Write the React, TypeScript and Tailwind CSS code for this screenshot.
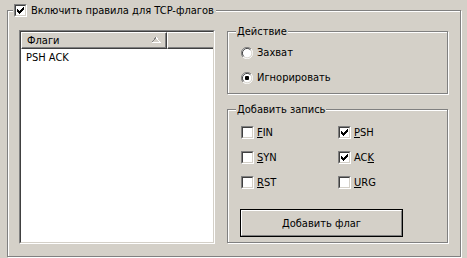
import React from "react";

const font = { fontFamily: '"DejaVu Sans Condensed", "DejaVu Sans", "Liberation Sans", sans-serif' };

function Check({ checked }: { checked?: boolean }) {
  return (
    <span className="block w-[13px] h-[13px] shrink-0 border border-t-[#808080] border-l-[#808080] border-b-white border-r-white">
      <span className="block w-full h-full bg-white border border-t-[#404040] border-l-[#404040] border-b-[#d4d0c8] border-r-[#d4d0c8]">
        {checked && (
          <svg width="9" height="9" viewBox="0 0 9 9" className="block" shapeRendering="crispEdges">
            <path d="M1 3h1v3h-1zM2 4h1v3h-1zM3 5h1v3h-1zM4 4h1v3h-1zM5 3h1v3h-1zM6 2h1v3h-1zM7 1h1v3h-1z" fill="#000" />
          </svg>
        )}
      </span>
    </span>
  );
}

function Radio({ checked }: { checked?: boolean }) {
  return (
    <svg width="12" height="12" viewBox="0 0 12 12" className="block shrink-0">
      <circle cx="6" cy="6" r="5.5" fill="#fff" />
      <path d="M10 2A5.5 5.5 0 0 0 2 10" stroke="#808080" strokeWidth="1" fill="none" />
      <path d="M9.5 2.8A4.5 4.5 0 0 0 2.8 9.5" stroke="#404040" strokeWidth="1" fill="none" />
      <path d="M2 10A5.5 5.5 0 0 0 10 2" stroke="#fff" strokeWidth="1" fill="none" />
      <path d="M2.8 9.5A4.5 4.5 0 0 0 9.5 2.8" stroke="#d4d0c8" strokeWidth="1" fill="none" />
      {checked && <rect x="4" y="4" width="4" height="4" rx="1" fill="#000" />}
    </svg>
  );
}

function Group({ title, className, children }: { title: string; className: string; children: React.ReactNode }) {
  return (
    <div className={`relative border border-[#808080] shadow-[inset_1px_1px_0_#fff,1px_1px_0_#fff] ${className}`}>
      <span className="absolute left-[8px] top-[-7px] bg-[#d4d0c8] px-[1px] leading-[13px]">{title}</span>
      {children}
    </div>
  );
}

function Flag({ label, under, checked }: { label: string; under: number; checked?: boolean }) {
  return (
    <div className="flex items-center h-[25px] gap-[3px]">
      <Check checked={checked} />
      <span>
        {label.slice(0, under)}
        <u className="underline-offset-[1px]">{label[under]}</u>
        {label.slice(under + 1)}
      </span>
    </div>
  );
}

export default function App() {
  return (
    <div className="w-[467px] h-[258px] bg-[#d4d0c8] pt-[10px] pl-[7px] text-[11px] leading-[13px] text-black" style={font}>
      <div className="relative w-[454px] h-[247px] border border-[#808080] shadow-[inset_1px_1px_0_#fff,1px_1px_0_#fff]">
        <div className="absolute left-[5px] top-[-7px] flex items-center gap-[4px] bg-[#d4d0c8] px-[1px] pr-[2px]">
          <Check checked />
          <span>Включить правила для TCP-флагов</span>
        </div>

        <div className="flex pl-[11px] pt-[19px] gap-[12px]">
          {/* list view */}
          <div className="w-[196px] h-[214px] border border-t-[#808080] border-l-[#808080] border-b-white border-r-white">
            <div className="w-full h-full bg-white border border-t-[#404040] border-l-[#404040] border-b-[#d4d0c8] border-r-[#d4d0c8] overflow-hidden">
              <div className="flex h-[17px] bg-[#d4d0c8]">
                <div className="w-[146px] h-full border-t border-l border-t-white border-l-white border-r border-b border-r-[#404040] border-b-[#404040]">
                  <div className="h-full flex items-center justify-between pl-[5px] pr-[3px] border-r border-b border-r-[#808080] border-b-[#808080]">
                    <span>Флаги</span>
                    <svg width="10" height="6" viewBox="0 0 10 6" className="block mr-[1px]" shapeRendering="crispEdges">
                      <path d="M0.5 5.5L5 0.5" stroke="#808080" fill="none" />
                      <path d="M5 0.5L9.5 5.5H0.5" stroke="#fff" fill="none" />
                    </svg>
                  </div>
                </div>
                <div className="flex-1 h-full border-t border-l border-t-white border-l-white border-b border-b-[#404040]">
                  <div className="h-full border-b border-b-[#808080]" />
                </div>
              </div>
              <div className="pl-[5px] pt-[2px]">PSH ACK</div>
            </div>
          </div>

          {/* right side */}
          <div className="flex flex-col">
            <Group title="Действие" className="w-[221px] h-[63px] mt-[1px]">
              <div className="pl-[13px] pt-[8px]">
                <div className="flex items-center h-[25px] gap-[4px]">
                  <Radio />
                  <span>Захват</span>
                </div>
                <div className="flex items-center h-[25px] gap-[4px]">
                  <Radio checked />
                  <span>Игнорировать</span>
                </div>
              </div>
            </Group>

            <Group title="Добавить запись" className="w-[221px] h-[134px] mt-[15px]">
              <div className="grid grid-cols-[97px_1fr] pl-[13px] pt-[10px]">
                <Flag label="FIN" under={0} />
                <Flag label="PSH" under={0} checked />
                <Flag label="SYN" under={0} />
                <Flag label="ACK" under={2} checked />
                <Flag label="RST" under={0} />
                <Flag label="URG" under={0} />
              </div>
              <div className="pl-[12px] mt-[14px]">
                <button className="block w-[163px] h-[28px] border border-black bg-[#d4d0c8] p-0">
                  <span className="flex items-center justify-center w-full h-full border border-t-white border-l-white border-b-[#808080] border-r-[#808080]">
                    Добавить флаг
                  </span>
                </button>
              </div>
            </Group>
          </div>
        </div>
      </div>
    </div>
  );
}
